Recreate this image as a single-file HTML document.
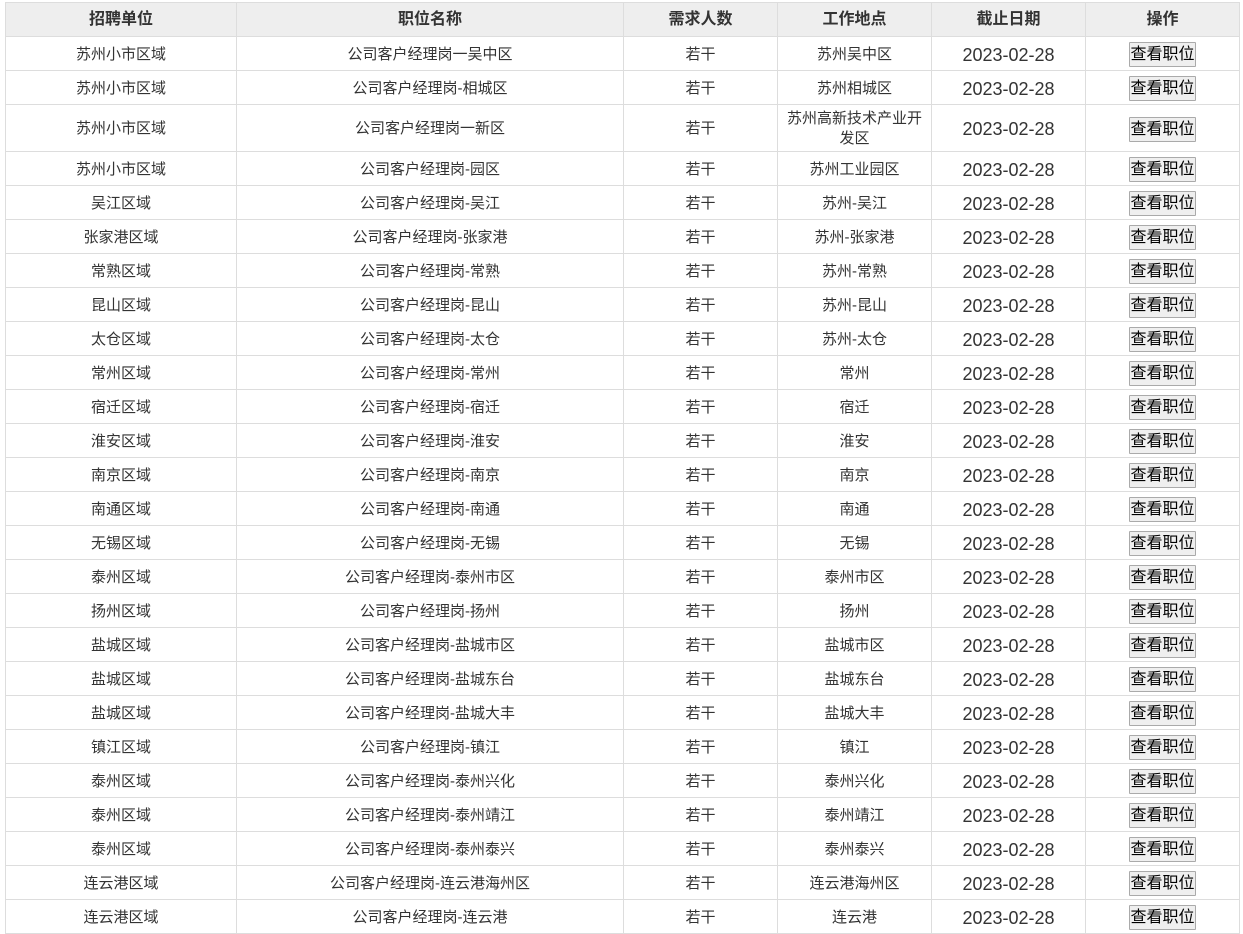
<!DOCTYPE html>
<html><head><meta charset="utf-8"><style>
body{margin:0;background:#fff;font-family:"Liberation Sans","Noto Sans CJK SC","Microsoft YaHei",sans-serif;color:#333;font-size:15px}
.t{position:absolute;left:5px;top:2px;width:1234px;border-top:1px solid #ddd;border-left:1px solid #ddd}
.r{display:flex;height:33px;border-bottom:1px solid #ddd}
.r.tall{height:46px}
.r>div{border-right:1px solid #ddd;display:flex;align-items:center;justify-content:center;text-align:center;box-sizing:border-box;line-height:20px;padding-top:2px}
.h{background:#eee;font-weight:bold;font-size:16px;color:#333}
.h>div{padding-top:0 !important}
.c1{width:231px}.c2{width:387px}.c3{width:154px}.c4{width:154px;padding-left:6px;padding-right:6px}.c5{width:154px;font-size:18px}.c6{width:154px}
.h .c5{font-size:16px}
.b{display:inline-block;height:23px;line-height:23px;padding:0;border:1px solid #aaa;background:#efefef;color:#000;font-size:16px;border-radius:1px}
</style></head><body>
<div class="t" id="t">
<div class="r h"><div class="c1">招聘单位</div><div class="c2">职位名称</div><div class="c3">需求人数</div><div class="c4">工作地点</div><div class="c5">截止日期</div><div class="c6">操作</div></div>
</div>
<script>
var d=[["苏州小市区域","公司客户经理岗一吴中区","苏州吴中区"],["苏州小市区域","公司客户经理岗-相城区","苏州相城区"],["苏州小市区域","公司客户经理岗一新区","苏州高新技术产业开发区"],["苏州小市区域","公司客户经理岗-园区","苏州工业园区"],["吴江区域","公司客户经理岗-吴江","苏州-吴江"],["张家港区域","公司客户经理岗-张家港","苏州-张家港"],["常熟区域","公司客户经理岗-常熟","苏州-常熟"],["昆山区域","公司客户经理岗-昆山","苏州-昆山"],["太仓区域","公司客户经理岗-太仓","苏州-太仓"],["常州区域","公司客户经理岗-常州","常州"],["宿迁区域","公司客户经理岗-宿迁","宿迁"],["淮安区域","公司客户经理岗-淮安","淮安"],["南京区域","公司客户经理岗-南京","南京"],["南通区域","公司客户经理岗-南通","南通"],["无锡区域","公司客户经理岗-无锡","无锡"],["泰州区域","公司客户经理岗-泰州市区","泰州市区"],["扬州区域","公司客户经理岗-扬州","扬州"],["盐城区域","公司客户经理岗-盐城市区","盐城市区"],["盐城区域","公司客户经理岗-盐城东台","盐城东台"],["盐城区域","公司客户经理岗-盐城大丰","盐城大丰"],["镇江区域","公司客户经理岗-镇江","镇江"],["泰州区域","公司客户经理岗-泰州兴化","泰州兴化"],["泰州区域","公司客户经理岗-泰州靖江","泰州靖江"],["泰州区域","公司客户经理岗-泰州泰兴","泰州泰兴"],["连云港区域","公司客户经理岗-连云港海州区","连云港海州区"],["连云港区域","公司客户经理岗-连云港","连云港"]];
var h="";d.forEach(function(x,i){h+='<div class="r'+(i==2?' tall':'')+'"><div class="c1">'+x[0]+'</div><div class="c2">'+x[1]+'</div><div class="c3">若干</div><div class="c4">'+x[2]+'</div><div class="c5">2023-02-28</div><div class="c6"><span class="b">查看职位</span></div></div>';});
document.getElementById("t").insertAdjacentHTML("beforeend",h);
</script>
</body></html>
